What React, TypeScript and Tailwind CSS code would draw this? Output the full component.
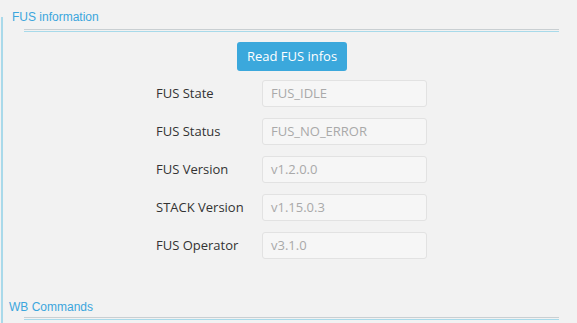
import React from "react";

const fusInfo = [
  { label: "FUS State", value: "FUS_IDLE" },
  { label: "FUS Status", value: "FUS_NO_ERROR" },
  { label: "FUS Version", value: "v1.2.0.0" },
  { label: "STACK Version", value: "v1.15.0.3" },
  { label: "FUS Operator", value: "v3.1.0" },
];

const SectionLines: React.FC = () => (
  <div className="ml-[21px] mr-[18px] flex flex-col gap-[1px]">
    <div className="h-px bg-[#c9cfd2]" />
    <div className="h-px bg-[#a8daea]" />
  </div>
);

const App: React.FC = () => {
  return (
    <div className="w-[577px] h-[323px] overflow-hidden bg-[#f2f2f2] pt-[17px] font-['Open_Sans',sans-serif]">
      <div className="ml-[1px] h-[306px] border-l-2 border-[#a9d9ea] flex flex-col">
        {/* FUS information */}
        <div className="-mt-[7px] pl-[9px] h-[14px] text-[12px] leading-[14px] text-[#3ba6dd] font-['Liberation_Sans',Arial,sans-serif]">
          FUS information
        </div>
        <div className="mt-[5px]">
          <SectionLines />
        </div>

        <div className="flex flex-col items-center pl-[4px] mt-[10px]">
          <button className="w-[110px] h-[29px] rounded-[3px] bg-[#3ba8dc] text-white text-[13px] leading-[29px]">
            Read FUS infos
          </button>
          <div className="mt-[9px] flex flex-col gap-[11px] w-[272px]">
            {fusInfo.map((row) => (
              <div key={row.label} className="flex items-center">
                <span className="w-[106px] text-[13px] text-[#333333]">{row.label}</span>
                <div className="w-[165px] h-[27px] rounded-[3px] border border-[#e2e2e2] bg-[#f6f6f6] pl-[8px] flex items-center text-[13px] text-[#a9a9a9]">
                  {row.value}
                </div>
              </div>
            ))}
          </div>
        </div>

        {/* WB Commands */}
        <div className="mt-auto pl-[6px] h-[14px] text-[12px] leading-[14px] text-[#3ba6dd] font-['Liberation_Sans',Arial,sans-serif]">
          WB Commands
        </div>
        <div className="mt-[3px] mb-[3px]">
          <SectionLines />
        </div>
      </div>
    </div>
  );
};

export default App;
